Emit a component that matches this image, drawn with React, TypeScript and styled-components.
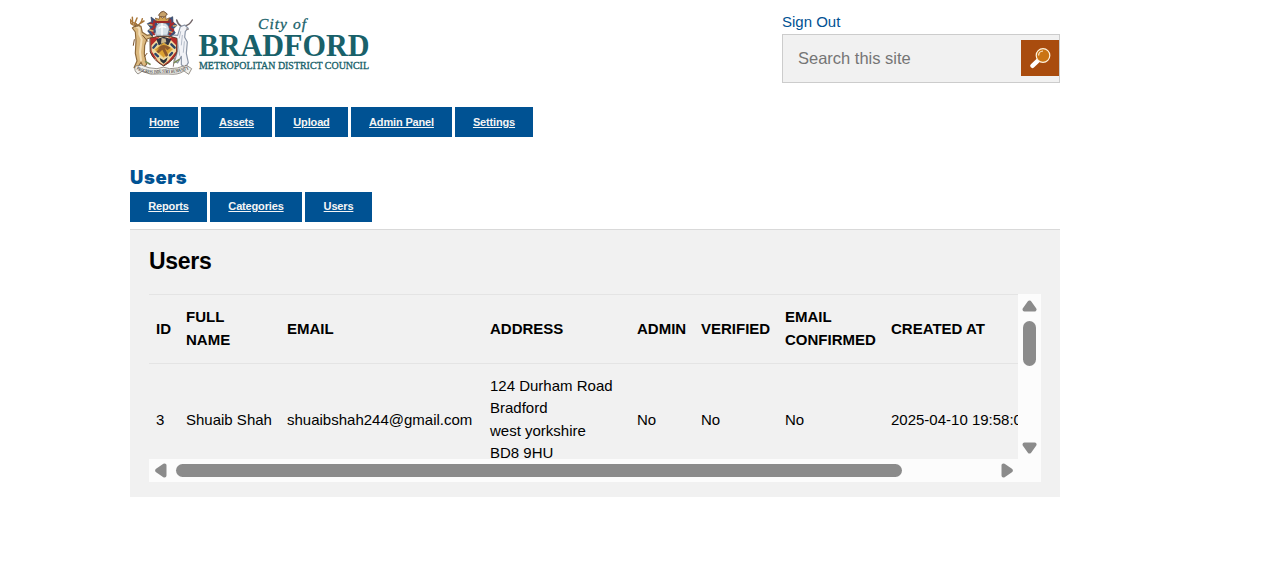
import React from "react";
import styled, { createGlobalStyle } from "styled-components";

const GlobalStyle = createGlobalStyle`
  * { box-sizing: border-box; }
  body {
    margin: 0;
    background: #fff;
    color: #000;
    font-family: "Liberation Sans", Arial, sans-serif;
    font-size: 15px;
    line-height: 22.5px;
    overflow: hidden;
  }
`;

const Page = styled.div`
  width: 930px;
  height: 574px;
  margin-left: 130px;
`;

const Header = styled.header`
  display: flex;
  justify-content: space-between;
  height: 107px;
  padding-top: 8px;
`;

const HeaderTools = styled.div`
  width: 278px;
  padding-top: 2px;
`;

const SignOut = styled.a`
  display: block;
  height: 24px;
  line-height: 24px;
  color: #005293;
  text-decoration: none;
`;

const SearchBox = styled.form`
  display: flex;
  align-items: flex-start;
  justify-content: space-between;
  height: 49px;
  border: 1px solid #ccc;
  background: #f1f1f1;
`;

const SearchInput = styled.input`
  flex: 1;
  min-width: 0;
  height: 47px;
  padding: 0 0 0 15px;
  border: 0;
  background: transparent;
  font: 16.5px "Liberation Sans", Arial, sans-serif;
  &::placeholder { color: #757575; opacity: 1; }
`;

const SearchButton = styled.button`
  display: block;
  width: 38px;
  height: 36px;
  margin-top: 5px;
  padding: 0;
  border: 0;
  background: #a94c0e;
  svg { display: block; }
`;

const Nav = styled.nav`
  display: flex;
  gap: 3px;
  height: 30px;
`;

const NavItem = styled.a<{ $width: number; $lineHeight: number }>`
  width: ${(p) => p.$width}px;
  background: #005293;
  color: #f5f5f5;
  font-size: 11px;
  font-weight: bold;
  letter-spacing: -0.16px;
  line-height: ${(p) => p.$lineHeight}px;
  text-align: center;
  text-decoration: underline;
`;

const PageTitle = styled.h1`
  height: 30px;
  margin: 25px 0 0;
  color: #005293;
  font: 900 18.5px/31px Inter, "Arial Black", sans-serif;
  letter-spacing: 0.6px;
`;

const Panel = styled.section`
  height: 268px;
  margin-top: 7px;
  padding: 0 19px;
  border-top: 1px solid #d9d9d9;
  background: #f1f1f1;
`;

const PanelTitle = styled.h2`
  height: 64px;
  margin: 0;
  font-size: 23px;
  line-height: 62px;
  letter-spacing: -0.3px;
`;

const ScrollArea = styled.div`
  display: grid;
  grid-template: 165px 23px / 869px 23px;
  background: #fcfcfc;
`;

const Viewport = styled.div`
  overflow: hidden;
  background: #f1f1f1;
`;

const Table = styled.table`
  width: 1150px;
  table-layout: fixed;
  border-collapse: separate;
  border-spacing: 0;
  border-top: 1px solid #e4e4e4;
`;

const HeadCell = styled.th`
  height: 69px;
  padding: 0 8px 2px 7px;
  border-bottom: 1px solid #e4e4e4;
  text-align: left;
  line-height: 23px;
  text-transform: uppercase;
`;

const Cell = styled.td<{ $multiline: boolean }>`
  height: 111px;
  padding: ${(p) => (p.$multiline ? "0" : "2px")} 0 0 7px;
  white-space: pre-line;
`;

const Track = styled.div<{ $vertical?: boolean }>`
  display: flex;
  flex-direction: ${(p) => (p.$vertical ? "column" : "row")};
  align-items: center;
  justify-content: space-between;
  padding: ${(p) => (p.$vertical ? "6px 0 5px" : "0 5px 0 6px")};
  svg { display: block; flex: none; }
`;

const Thumb = styled.div<{ $vertical?: boolean }>`
  width: ${(p) => (p.$vertical ? "13px" : "726px")};
  height: ${(p) => (p.$vertical ? "45px" : "13px")};
  margin: ${(p) => (p.$vertical ? "9px 0 auto" : "0 auto 0 9px")};
  border-radius: 7px;
  background: #8b8b8b;
`;

const Arrow = ({ dir }: { dir: "up" | "down" | "left" | "right" }) => {
  const vertical = dir === "up" || dir === "down";
  const paths = {
    up: "M7.5 2.5 L12.5 9.5 H2.5Z",
    down: "M7.5 9.5 L12.5 2.5 H2.5Z",
    left: "M2.2 7.5 L9.5 2.5 V12.5Z",
    right: "M9.8 7.5 L2.5 2.5 V12.5Z",
  };
  return (
    <svg width={vertical ? 15 : 12} height={vertical ? 12 : 15}>
      <path d={paths[dir]} fill="#8b8b8b" stroke="#8b8b8b" strokeWidth="4" strokeLinejoin="round" />
    </svg>
  );
};

const SearchIcon = () => (
  <svg width="38" height="36" viewBox="0 0 38 36">
    <path d="M11.4 25.8 L17.2 20.3" stroke="#fff" strokeWidth="4.4" strokeLinecap="round" />
    <circle cx="22" cy="15.5" r="6.8" fill="#ca7414" stroke="#fff4df" strokeWidth="1.2" />
    <path d="M17.6 15.5 A4.6 4.6 0 0 1 22 11" fill="none" stroke="#fff0d8" strokeWidth="1.2" />
  </svg>
);

const Crest = () => (
  <g transform="translate(-5 -3) scale(.3333)" strokeLinejoin="round" strokeLinecap="round">
    {/* stag */}
    <path d="M34 61 Q14 61 15 43 Q21 54 34 56 M23 56 L22 37 M29 56 L36 39 M38 61 Q49 56 52 41 M46 55 L57 48" fill="none" stroke="#a9773a" strokeWidth="4.5" />
    <path d="M22 69 L35 59 L48 64 L52 82 L66 91 L81 88 L83 96 L66 102 L59 122 L58 147 L65 178 L55 187 L48 172 L37 189 L27 188 L36 168 L31 145 L33 108 L31 81Z" fill="#dcb97f" stroke="#8c683a" strokeWidth="3.5" />
    <path d="M36 66 L43 70 L43 88 L50 103 L45 141 L48 166" fill="none" stroke="#f3dfb9" strokeWidth="6" />
    <path d="M31 64 L38 63 M28 104 L25 121 M59 154 L66 145 M53 91 L68 109" stroke="#76502d" strokeWidth="3" />
    {/* angora goat */}
    <path d="M169 64 Q158 58 155 45 M178 63 Q193 61 202 45" fill="none" stroke="#706467" strokeWidth="4.5" />
    <path d="M166 65 L179 60 L190 70 L181 79 L179 97 L187 111 L184 145 L190 173 L181 188 L169 179 L169 154 L158 174 L149 168 L156 144 L154 107 L136 101 L129 88 L158 91Z" fill="#f2f3f7" stroke="#8a94a5" strokeWidth="3.5" />
    <path d="M167 80 L163 99 M172 91 L169 120 M178 110 L175 142 M158 108 L164 151" stroke="#b4bcc9" strokeWidth="3" />
    <path d="M184 72 L190 73 M148 160 L145 184 M181 181 L190 187" stroke="#8c7c78" strokeWidth="3" />
    {/* mantling and helmet */}
    <path d="M80 92 L68 78 L77 69 L67 56 L80 50 L78 36 L91 46 L97 58 L112 50 L123 58 L130 42 L143 35 L144 51 L156 61 L144 73 L151 84 L137 94 L123 78 L95 78Z" fill="#3b517d" stroke="#293855" strokeWidth="2" />
    <path d="M78 55 L90 66 L78 75 L87 88 M145 55 L132 67 L145 75 L134 88 M88 48 L86 58 M136 46 L137 58" fill="none" stroke="#a92a2b" strokeWidth="6" />
    <path d="M74 75 L84 78 M72 59 L81 60 M145 63 L153 62 M141 82 L132 79" stroke="#d9b26c" strokeWidth="4" />
    <path d="M91 72 Q96 51 112 53 Q131 54 133 72 L128 91 H94Z" fill="#d4e0e7" stroke="#606a7a" strokeWidth="2" />
    <path d="M102 69 Q111 61 122 67 M111 56 V90" fill="none" stroke="#fff" strokeWidth="4" />
    <path d="M95 51 L91 39 L102 43 L105 31 L112 40 L122 32 L123 43 L134 38 L128 51Z" fill="#d4a552" stroke="#6c482d" strokeWidth="2" />
    <path d="M93 51 H131" stroke="#9b2927" strokeWidth="6" />
    <path d="M101 30 Q107 18 116 19 L127 27 L119 36 L107 35Z" fill="#c8a269" stroke="#725137" strokeWidth="3" />
    {/* shield */}
    <path d="M76 100 Q96 92 115 94 Q138 92 156 100 V140 Q149 165 116 183 Q85 166 76 142Z" fill="#b22d25" stroke="#52412e" strokeWidth="3" />
    <path d="M79 111 L96 96 L137 96 L153 112 V141 L130 168 L115 180 L91 163 L80 142Z" fill="#efdaa0" />
    <path d="M77 100 L104 96 L78 122Z M129 96 L155 101 V122Z M78 136 L101 171 L83 153Z M154 138 L130 171 L148 155Z" fill="#b52b28" />
    <path d="M94 103 L116 95 L139 103 L130 121 H101Z" fill="#323340" />
    <path d="M110 99 L122 101 L124 112 L108 115Z" fill="#c9b68e" />
    <path d="M116 113 L144 133 L116 158 L89 134Z" fill="#dda331" stroke="#e9c66b" strokeWidth="2" />
    <path d="M95 134 Q112 109 137 128 L127 136 L119 128 L130 151 L123 156 L112 134 L101 145 L94 140 L106 127Z" fill="#8f5a2b" />
    <path d="M85 128 L94 118 M139 118 L149 128 M99 154 L91 147 M135 151 L141 144" stroke="#2c4568" strokeWidth="7" />
    <path d="M104 159 L116 166 L128 157 L124 169 L116 176 L107 169Z" fill="#2b3138" />
    {/* motto ribbon */}
    <path d="M31 184 Q25 197 39 207 L51 199 Q78 212 101 207 L130 207 Q159 211 177 198 L191 208 L200 191 L186 182 Q172 183 157 189 L134 191 Q115 182 96 191 Q71 191 51 181Z" fill="#f1f0eb" stroke="#858077" strokeWidth="2.5" />
    <path d="M62 170 L75 178 M148 173 L162 164" stroke="#798c56" strokeWidth="5" />
    <path id="motto" d="M34 193 Q66 211 113 203 Q155 207 195 192" fill="none" />
    <text fontFamily="Liberation Serif, serif" fontSize="15" fontWeight="700" fill="#443f43">
      <textPath href="#motto" textLength="161" lengthAdjust="spacingAndGlyphs">PROGRESS INDUSTRY HUMANITY</textPath>
    </text>
  </g>
);

const Logo = () => (
  <svg width="240" height="70" viewBox="0 0 240 70">
    <Crest />
    <g fill="#19616a" fontFamily="Liberation Serif, serif">
      <text x="128" y="21" fontSize="15.5" fontStyle="italic" stroke="#19616a" strokeWidth=".3" textLength="48">City of</text>
      <text x="68.5" y="47.5" fontSize="30.5" fontWeight="bold" textLength="171" lengthAdjust="spacingAndGlyphs">BRADFORD</text>
      <text x="69" y="61" fontSize="10.8" stroke="#19616a" strokeWidth=".35" textLength="170" lengthAdjust="spacingAndGlyphs">METROPOLITAN DISTRICT COUNCIL</text>
    </g>
  </svg>
);

const mainNav: [string, number][] = [["Home", 68], ["Assets", 71], ["Upload", 73], ["Admin Panel", 101], ["Settings", 78]];
const adminNav: [string, number][] = [["Reports", 77], ["Categories", 92], ["Users", 67]];

const columns: [string, number][] = [
  ["ID", 30], ["Full Name", 101], ["Email", 203], ["Address", 147],
  ["Admin", 64], ["Verified", 84], ["Email Confirmed", 106], ["Created At", 415],
];
const user = [
  "3", "Shuaib Shah", "shuaibshah244@gmail.com", "124 Durham Road\nBradford\nwest yorkshire\nBD8 9HU",
  "No", "No", "No", "2025-04-10 19:58:0",
];

const Menu = ({ items, lineHeight = 30 }: { items: [string, number][]; lineHeight?: number }) => (
  <Nav>
    {items.map(([label, width]) => (
      <NavItem key={label} href="#" $width={width} $lineHeight={lineHeight}>{label}</NavItem>
    ))}
  </Nav>
);

export default function App() {
  return (
    <>
      <GlobalStyle />
      <Page>
        <Header>
          <Logo />
          <HeaderTools>
            <SignOut href="#">Sign Out</SignOut>
            <SearchBox>
              <SearchInput placeholder="Search this site" />
              <SearchButton type="button" aria-label="Search"><SearchIcon /></SearchButton>
            </SearchBox>
          </HeaderTools>
        </Header>
        <Menu items={mainNav} />
        <PageTitle>Users</PageTitle>
        <Menu items={adminNav} lineHeight={28} />
        <Panel>
          <PanelTitle>Users</PanelTitle>
          <ScrollArea>
            <Viewport>
              <Table>
                <colgroup>{columns.map(([name, w]) => <col key={name} width={w} />)}</colgroup>
                <thead>
                  <tr>{columns.map(([name]) => <HeadCell key={name}>{name}</HeadCell>)}</tr>
                </thead>
                <tbody>
                  <tr>{user.map((value, i) => <Cell key={i} $multiline={value.includes("\n")}>{value}</Cell>)}</tr>
                </tbody>
              </Table>
            </Viewport>
            <Track $vertical><Arrow dir="up" /><Thumb $vertical /><Arrow dir="down" /></Track>
            <Track><Arrow dir="left" /><Thumb /><Arrow dir="right" /></Track>
          </ScrollArea>
        </Panel>
      </Page>
    </>
  );
}
